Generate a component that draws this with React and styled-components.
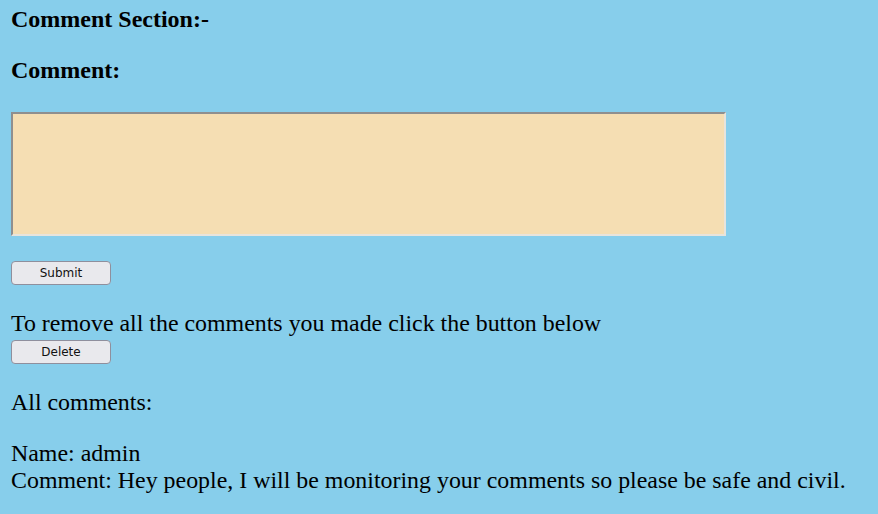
import React from 'react'
import styled, { createGlobalStyle } from 'styled-components'

const GlobalStyle = createGlobalStyle`
  html, body {
    margin: 0;
    padding: 0;
    background: #87ceeb;
  }
  body {
    font-family: "Liberation Serif", "Times New Roman", serif;
    font-size: 23.9px;
    color: #000;
  }
`

const Page = styled.div`
  padding: 6px 11px 0;
  min-height: 510px;
  box-sizing: border-box;
`

const Heading = styled.h2`
  font-size: 24px;
  font-weight: bold;
  margin: 0 0 ${p => p.$gap || 0}px;
`

const CommentBox = styled.textarea`
  display: block;
  box-sizing: border-box;
  width: 715px;
  height: 124px;
  margin: 28px 0 25px;
  background: #f5deb3;
  border-width: 2px;
  border-style: solid;
  border-color: #8f8f8f #e8e4dc #e8e4dc #8f8f8f;
  resize: none;
  outline: none;
`

const Button = styled.button`
  display: block;
  box-sizing: border-box;
  width: 100px;
  height: 24px;
  padding: 0;
  background: #e9e9ed;
  border: 1px solid #8f8f9d;
  border-radius: 4px;
  font-family: "DejaVu Sans", Verdana, sans-serif;
  font-size: 12px;
  color: #111;
  margin: ${p => p.$margin || '0'};
`

const Text = styled.p`
  margin: ${p => p.$margin || '0'};
  line-height: normal;
`

export default function App() {
  return (
    <>
      <GlobalStyle />
      <Page>
        <Heading $gap={24}>Comment Section:-</Heading>
        <Heading>Comment:</Heading>
        <CommentBox />
        <Button $margin="0 0 25px">Submit</Button>
        <Text $margin="0 0 3px">To remove all the comments you made click the button below</Text>
        <Button $margin="0 0 25px">Delete</Button>
        <Text $margin="0 0 24px">All comments:</Text>
        <Text>Name: admin</Text>
        <Text>Comment: Hey people, I will be monitoring your comments so please be safe and civil.</Text>
      </Page>
    </>
  )
}
